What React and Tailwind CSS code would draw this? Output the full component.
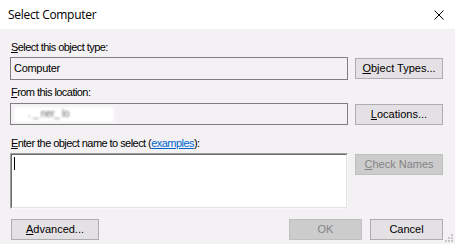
import React from "react";

const U = ({ children }) => <span className="underline underline-offset-[1px]">{children}</span>;

function Btn({ children, disabled, w = "w-[88px]" }) {
  return (
    <div
      className={`${w} h-[21px] flex items-center justify-center border text-[11px] leading-[13px] ${
        disabled
          ? "bg-[#cccccc] border-[#bfbfbf] text-[#838383]"
          : "bg-[#e4e1e4] border-[#adadad] text-black"
      }`}
    >
      {children}
    </div>
  );
}

export default function App() {
  return (
    <div
      className="w-[455px] h-[244px] bg-[#f4f1f4] relative overflow-hidden"
      style={{ fontFamily: '"Liberation Sans", Arial, sans-serif' }}
    >
      {/* Title bar */}
      <div className="h-[29px] bg-white flex items-center justify-between pl-[8px] pr-[11px]">
        <span
          className="text-[12px] tracking-[-0.3px] text-black"
          style={{ fontFamily: '"Open Sans", "Noto Sans", sans-serif' }}
        >
          Select Computer
        </span>
        <svg width="10" height="10" viewBox="0 0 10 10" className="mt-[1px]">
          <path d="M0.5 0.5 L9.5 9.5 M9.5 0.5 L0.5 9.5" stroke="#000" strokeWidth="1" fill="none" />
        </svg>
      </div>

      <div className="pl-[10px] pr-[12px] text-[11px] leading-[13px] text-black">
        {/* Object type */}
        <div className="mt-[12px] pl-[1px] h-[13px] tracking-[-0.55px]">
          <U>S</U>elect this object type:
        </div>
        <div className="mt-[3px] flex items-center">
          <div className="w-[338px] h-[23px] border border-[#7f7f7f] flex items-center pl-[3px] tracking-[-0.3px]">
            Computer
          </div>
          <div className="ml-[7px]">
            <Btn>
              <U>O</U>bject Types...
            </Btn>
          </div>
        </div>

        {/* Location */}
        <div className="mt-[6px] pl-[1px] h-[13px] tracking-[-0.55px]">
          <U>F</U>rom this location:
        </div>
        <div className="mt-[4px] flex items-center">
          <div className="w-[338px] h-[22px] border border-[#7f7f7f] flex items-center pl-[1px] relative">
            <div className="relative w-[100px] h-[15px] ml-[2px]">
              <div className="absolute inset-0 bg-white blur-[1px] rounded-sm" />
              <span className="absolute left-[14px] top-[0px] text-[#6a6a6a] blur-[0.8px] text-[10px] tracking-[-0.3px]">
                .  _ ner_ lo
              </span>
            </div>
          </div>
          <div className="ml-[7px] mt-[1px]">
            <Btn>
              <U>L</U>ocations...
            </Btn>
          </div>
        </div>

        {/* Object name */}
        <div className="mt-[12px] pl-[1px] h-[13px] tracking-[-0.55px]">
          <U>E</U>nter the object name to select (
          <span className="text-[#0066cc] underline underline-offset-[1px]">examples</span>):
        </div>
        <div className="mt-[3px] flex items-start">
          <div className="w-[338px] h-[56px] border-t border-l border-t-[#a0a0a0] border-l-[#a0a0a0] border-r border-b border-r-[#f7f7f7] border-b-[#f7f7f7]">
            <div className="w-full h-full bg-white border-t border-l border-t-[#696969] border-l-[#696969] border-r border-b border-r-[#e3e3e3] border-b-[#e3e3e3] pl-[2px] pt-[2px]">
              <div className="w-[1px] h-[13px] bg-black" />
            </div>
          </div>
          <div className="ml-[7px] mt-[1px]">
            <Btn disabled>
              <U>C</U>heck Names
            </Btn>
          </div>
        </div>

        {/* Bottom buttons */}
        <div className="mt-[10px] flex items-center">
          <div className="ml-[1px]">
            <Btn>
              <U>A</U>dvanced...
            </Btn>
          </div>
          <div className="flex-1" />
          <Btn disabled w="w-[73px]">
            OK
          </Btn>
          <div className="ml-[8px]">
            <Btn w="w-[73px]">Cancel</Btn>
          </div>
        </div>
      </div>

      {/* Size grip */}
      <svg width="10" height="10" viewBox="0 0 10 10" className="absolute right-[1px] bottom-[1px]">
        <rect x="7" y="1" width="2" height="2" fill="#c8c4c8" />
        <rect x="4" y="4" width="2" height="2" fill="#c8c4c8" />
        <rect x="7" y="4" width="2" height="2" fill="#c8c4c8" />
        <rect x="1" y="7" width="2" height="2" fill="#c8c4c8" />
        <rect x="4" y="7" width="2" height="2" fill="#c8c4c8" />
        <rect x="7" y="7" width="2" height="2" fill="#c8c4c8" />
      </svg>
    </div>
  );
}
